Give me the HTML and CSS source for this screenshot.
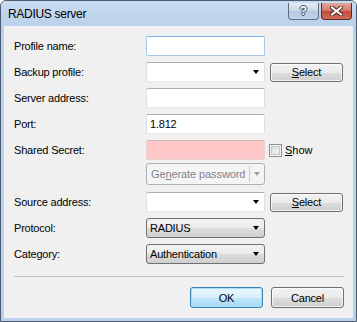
FILE: index.html
```html
<!DOCTYPE html>
<html lang="en">
<head>
    <meta charset="UTF-8">
    <title>RADIUS server</title>
    <link rel="stylesheet" href="styles.css">
</head>
<body>
    <div class="window">
        <div class="titlebar">
            <span class="title">RADIUS server</span>
            <span class="cap-btn help">?</span>
            <span class="cap-btn close">
                <svg width="13" height="10" viewBox="0 0 13 10">
                    <path d="M2 1.5 L11 8.5 M11 1.5 L2 8.5" stroke="#4a2420" stroke-width="4" stroke-linecap="square"/>
                    <path d="M2 1.5 L11 8.5 M11 1.5 L2 8.5" stroke="#fff" stroke-width="2" stroke-linecap="square"/>
                </svg>
            </span>
        </div>

        <div class="client">
            <div class="form">
                <label class="lbl">Profile name:</label>
                <div class="edit focus"></div>
                <div></div>

                <label class="lbl">Backup profile:</label>
                <div class="edit combo"><span class="arrow"></span></div>
                <button class="btn"><u>S</u>elect</button>

                <label class="lbl">Server address:</label>
                <div class="edit"></div>
                <div></div>

                <label class="lbl">Port:</label>
                <div class="edit"><span class="value">1.812</span></div>
                <div></div>

                <label class="lbl">Shared Secret:</label>
                <div class="edit secret"></div>
                <div class="check">
                    <span class="box"></span>
                    <span><u>S</u>how</span>
                </div>

                <div></div>
                <div class="split disabled">
                    <span class="split-text">Ge<u>n</u>erate password</span>
                    <span class="split-drop"><span class="arrow gray"></span></span>
                </div>
                <div></div>

                <label class="lbl">Source address:</label>
                <div class="edit combo"><span class="arrow"></span></div>
                <button class="btn"><u>S</u>elect</button>

                <label class="lbl">Protocol:</label>
                <div class="dropdown"><span>RADIUS</span><span class="arrow"></span></div>
                <div></div>

                <label class="lbl">Category:</label>
                <div class="dropdown"><span>Authentication</span><span class="arrow"></span></div>
                <div></div>
            </div>

            <div class="sep"></div>

            <div class="actions">
                <button class="btn default">OK</button>
                <button class="btn">Cancel</button>
            </div>
        </div>
    </div>
</body>
</html>
```

FILE: styles.css
```css
* {
    margin: 0;
    padding: 0;
    box-sizing: border-box;
}

body {
    font-family: 'Liberation Sans', Arial, sans-serif;
    font-size: 11px;
    color: #000;
    background: #fff;
}

/* Window frame */
.window {
    width: 357px;
    height: 322px;
    border: 1px solid #4a5a70;
    border-radius: 6px 6px 0 0;
    background: #b9d1ea;
    padding: 0 3px 3px 3px;
    display: flex;
    flex-direction: column;
}

.titlebar {
    height: 25px;
    display: flex;
    align-items: flex-start;
    background: linear-gradient(#c8dbf0, #b9d1ea);
    margin: 0 -3px;
    padding: 0 4px 0 7px;
    border-radius: 5px 5px 0 0;
}

.title {
    flex: 1;
    font-size: 12px;
    letter-spacing: -0.3px;
    line-height: 25px;
    padding-top: 1px;
}

.cap-btn {
    width: 31px;
    height: 17px;
    margin-top: 2px;
    border: 1px solid #5f6e82;
    border-top: none;
    border-radius: 0 0 4px 4px;
    display: flex;
    align-items: center;
    justify-content: center;
}

.help {
    background: linear-gradient(#e4ecf6, #c7d7ea 50%, #b4c8e2 51%, #c2d4ea);
    margin-right: 2px;
    color: #fff;
    font-weight: bold;
    font-size: 12px;
    text-shadow: 1px 0 #3b4a5e, -1px 0 #3b4a5e, 0 1px #3b4a5e, 0 -1px #3b4a5e;
}

.close {
    background: linear-gradient(#e3a79e, #d07a6c 50%, #c3493a 51%, #d26d5c);
    border-color: #5a2a24;
}

/* Client area */
.client {
    flex: 1;
    background: #f0f0f0;
    padding: 10px 9px 0 10px;
    display: flex;
    flex-direction: column;
}

.form {
    display: grid;
    grid-template-columns: 127px 119px 73px;
    grid-auto-rows: 20px;
    column-gap: 5px;
    row-gap: 6px;
}

.lbl {
    display: flex;
    align-items: center;
    letter-spacing: -0.2px;
}

/* Text boxes */
.edit {
    background: #fff;
    border: 1px solid #dbdfe6;
    border-top-color: #abadb3;
    border-bottom-color: #e3e9ef;
    border-radius: 2px;
    display: flex;
    align-items: center;
    padding: 0 3px;
}

.edit.focus {
    border-color: #a9c9ea;
    border-top-color: #7eb4ea;
}

.edit.secret {
    background: #ffc8c8;
    border-color: #e6d0d0;
    border-top-color: #c9b3b3;
}

.edit.combo {
    justify-content: flex-end;
    padding-right: 5px;
}

.value {
    letter-spacing: -0.2px;
}

.arrow {
    width: 0;
    height: 0;
    border-left: 3.5px solid transparent;
    border-right: 3.5px solid transparent;
    border-top: 4px solid #000;
}

.arrow.gray {
    border-top-color: #a0a0a0;
}

/* Drop-down lists */
.dropdown {
    border: 1px solid #707070;
    border-radius: 3px;
    background: linear-gradient(#f2f2f2, #ebebeb 50%, #dddddd 51%, #cfcfcf);
    display: flex;
    align-items: center;
    justify-content: space-between;
    padding: 0 5px 0 3px;
    letter-spacing: -0.2px;
}

/* Buttons */
.btn {
    font-family: inherit;
    font-size: 11px;
    color: #000;
    border: 1px solid #707070;
    border-radius: 3px;
    background: linear-gradient(#f2f2f2, #ebebeb 50%, #dddddd 51%, #cfcfcf);
    box-shadow: inset 0 0 0 1px rgba(255, 255, 255, 0.7);
    letter-spacing: -0.2px;
    height: 19px;
    align-self: center;
}

.btn.default {
    border-color: #3c7fb1;
    background: linear-gradient(#eaf6fd, #d9f0fc 50%, #bee6fd 51%, #a7d9f5);
    box-shadow: inset 0 0 0 1px #a6e0fb;
}

/* Checkbox */
.check {
    display: flex;
    align-items: center;
    gap: 3px;
    margin-left: -1px;
}

.box {
    width: 13px;
    height: 13px;
    border: 1px solid #8e8f8f;
    background: linear-gradient(135deg, #d8d8d8, #f8f8f8);
    box-shadow: inset 0 0 0 1px #f4f4f4, inset 0 0 0 2px #c6c6c6;
}

/* Split button (disabled) */
.split {
    height: 22px;
    margin-top: -3px;
    border: 1px solid #adb2b5;
    border-radius: 3px;
    background: #f4f4f4;
    display: flex;
    color: #838383;
    font-size: 11px;
    letter-spacing: -0.1px;
}

.split-text {
    flex: 1;
    display: flex;
    align-items: center;
    padding-left: 4px;
}

.split-drop {
    width: 15px;
    border-left: 1px solid #c9cbcd;
    display: flex;
    align-items: center;
    justify-content: center;
    margin: 2px 0;
}

/* Bottom */
.sep {
    border-top: 1px solid #c0c0c0;
    margin-top: 12px;
}

.actions {
    display: flex;
    justify-content: flex-end;
    gap: 8px;
    margin-top: 10px;
}

.actions .btn {
    width: 73px;
    height: 21px;
}
```
